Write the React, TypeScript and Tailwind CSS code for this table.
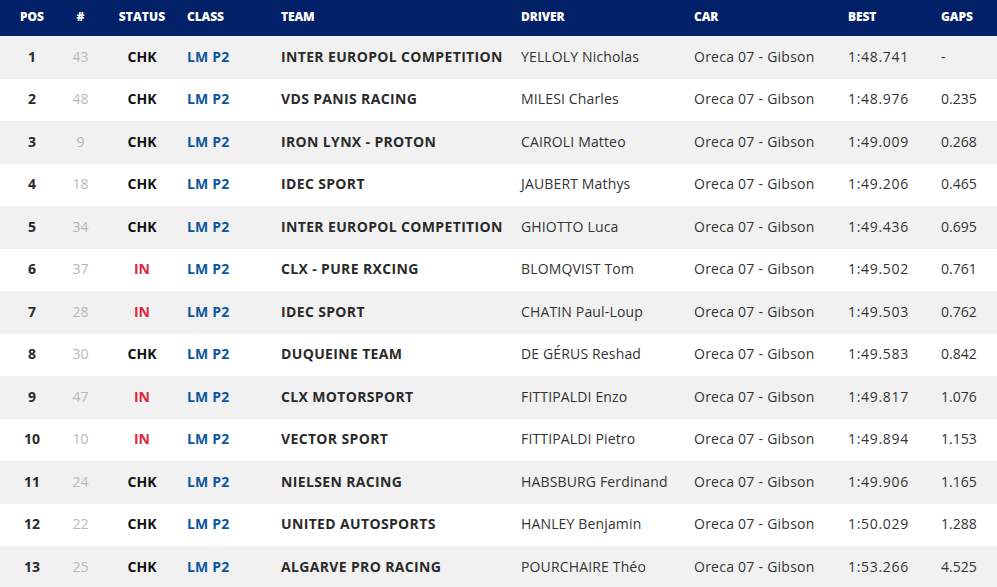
const rows = [
  { pos: 1, num: 43, status: 'CHK', team: 'INTER EUROPOL COMPETITION', driver: 'YELLOLY Nicholas', best: '1:48.741', gap: '-' },
  { pos: 2, num: 48, status: 'CHK', team: 'VDS PANIS RACING', driver: 'MILESI Charles', best: '1:48.976', gap: '0.235' },
  { pos: 3, num: 9, status: 'CHK', team: 'IRON LYNX - PROTON', driver: 'CAIROLI Matteo', best: '1:49.009', gap: '0.268' },
  { pos: 4, num: 18, status: 'CHK', team: 'IDEC SPORT', driver: 'JAUBERT Mathys', best: '1:49.206', gap: '0.465' },
  { pos: 5, num: 34, status: 'CHK', team: 'INTER EUROPOL COMPETITION', driver: 'GHIOTTO Luca', best: '1:49.436', gap: '0.695' },
  { pos: 6, num: 37, status: 'IN', team: 'CLX - PURE RXCING', driver: 'BLOMQVIST Tom', best: '1:49.502', gap: '0.761' },
  { pos: 7, num: 28, status: 'IN', team: 'IDEC SPORT', driver: 'CHATIN Paul-Loup', best: '1:49.503', gap: '0.762' },
  { pos: 8, num: 30, status: 'CHK', team: 'DUQUEINE TEAM', driver: 'DE GÉRUS Reshad', best: '1:49.583', gap: '0.842' },
  { pos: 9, num: 47, status: 'IN', team: 'CLX MOTORSPORT', driver: 'FITTIPALDI Enzo', best: '1:49.817', gap: '1.076' },
  { pos: 10, num: 10, status: 'IN', team: 'VECTOR SPORT', driver: 'FITTIPALDI Pietro', best: '1:49.894', gap: '1.153' },
  { pos: 11, num: 24, status: 'CHK', team: 'NIELSEN RACING', driver: 'HABSBURG Ferdinand', best: '1:49.906', gap: '1.165' },
  { pos: 12, num: 22, status: 'CHK', team: 'UNITED AUTOSPORTS', driver: 'HANLEY Benjamin', best: '1:50.029', gap: '1.288' },
  { pos: 13, num: 25, status: 'CHK', team: 'ALGARVE PRO RACING', driver: 'POURCHAIRE Théo', best: '1:53.266', gap: '4.525' },
];

const cols = 'grid grid-cols-[64px_33px_90px_94px_240px_173px_154px_93px_56px] items-center';

const App = () => {
  return (
    <div className="w-[997px] h-[587px] overflow-hidden bg-white font-['Open_Sans',sans-serif] text-[14px]">
      <div className={`${cols} h-[36px] pb-[2px] bg-[#032169] text-white text-[12px] font-extrabold tracking-[-0.1px]`}>
        <div className="text-center">POS</div>
        <div className="text-center">#</div>
        <div className="text-center tracking-[0.1px]">STATUS</div>
        <div>CLASS</div>
        <div>TEAM</div>
        <div>DRIVER</div>
        <div>CAR</div>
        <div>BEST</div>
        <div>GAPS</div>
      </div>
      {rows.map((r) => (
        <div
          key={r.pos}
          className={`${cols} h-[42.5px] pb-[2px] ${r.pos % 2 === 1 ? 'bg-[#f1f1f1]' : 'bg-white'} text-[#2a2a2a]`}
        >
          <div className="text-center font-bold">{r.pos}</div>
          <div className="text-center text-[#b3b8bf]">{r.num}</div>
          <div className={`text-center font-bold ${r.status === 'IN' ? 'text-[#e0263f]' : 'text-[#111]'}`}>
            {r.status}
          </div>
          <div className="font-bold text-[#0b57a0] tracking-[0.2px]">LM P2</div>
          <div className="font-bold tracking-[0.35px] whitespace-nowrap">{r.team}</div>
          <div className="text-[#333] tracking-[0.15px]">{r.driver}</div>
          <div className="text-[#333] tracking-[0.25px]">Oreca 07 - Gibson</div>
          <div className="text-[#333] tracking-[0.7px]">{r.best}</div>
          <div className="text-[#333]">{r.gap}</div>
        </div>
      ))}
    </div>
  );
};

export default App;
